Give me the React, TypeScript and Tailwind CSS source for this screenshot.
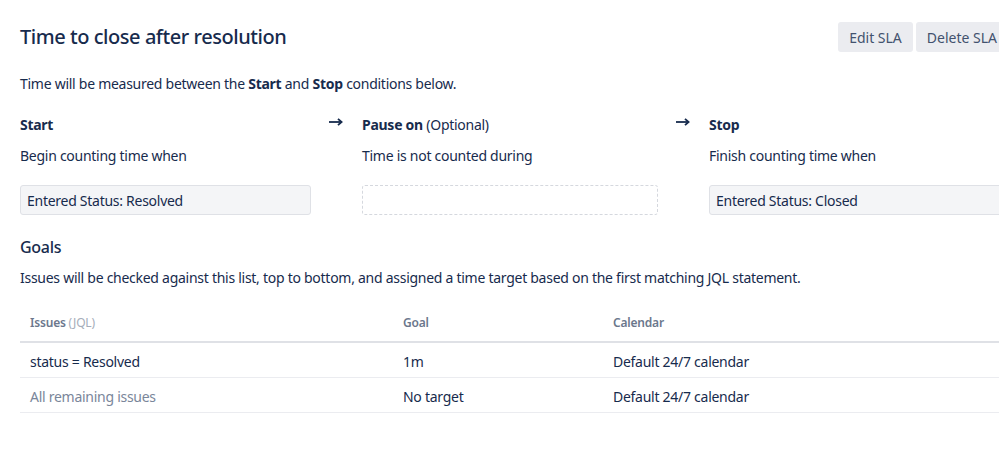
import React from 'react';

const font = { fontFamily: '"Noto Sans", "Open Sans", sans-serif' };

const Arrow = () => (
  <svg width="14" height="8" viewBox="0 0 14 8" className="mt-[3px] ml-[18px]">
    <path d="M0 4h12" stroke="#172b4d" strokeWidth="1.8" />
    <path d="M9 0.8L12.6 4L9 7.2" fill="none" stroke="#172b4d" strokeWidth="1.8" />
  </svg>
);

const Condition = ({
  title,
  note,
  sub,
  value,
}: {
  title: string;
  note?: string;
  sub: string;
  value?: string;
}) => (
  <div>
    <div className="text-[14px] leading-5 text-[#172b4d]">
      <span className="font-bold">{title}</span>
      {note && <span> {note}</span>}
    </div>
    <div className="mt-[11px] text-[14px] leading-5 text-[#172b4d]">{sub}</div>
    {value ? (
      <div className="mt-[19px] h-[30px] rounded-[3px] border border-[#dfe1e6] bg-[#f4f5f7] px-[6px] pt-[1px] flex items-center text-[14px] text-[#172b4d]">
        {value}
      </div>
    ) : (
      <div className="mt-[19px] h-[30px] rounded-[3px] border border-dashed border-[#d5d8de]" />
    )}
  </div>
);

const rows = [
  { jql: 'status = Resolved', goal: '1m', cal: 'Default 24/7 calendar', muted: false },
  { jql: 'All remaining issues', goal: 'No target', cal: 'Default 24/7 calendar', muted: true },
];

export default function App() {
  return (
    <div className="w-full min-h-screen bg-white overflow-hidden tracking-[-0.27px]" style={font}>
      <div className="w-[1008px] pl-5 pt-[22px]">
        <div className="flex items-center justify-between h-[30px]">
          <h1 className="text-[20px] font-medium text-[#172b4d] leading-6 tracking-[-0.45px]">Time to close after resolution</h1>
          <div className="flex gap-[3px]">
            <button className="h-[30px] px-[11px] rounded-[3px] bg-[#ebecf0] text-[14px] tracking-normal text-[#42526e]">Edit SLA</button>
            <button className="h-[30px] px-[11px] rounded-[3px] bg-[#ebecf0] text-[14px] tracking-normal text-[#42526e]">Delete SLA</button>
          </div>
        </div>

        <p className="mt-[22px] text-[14px] leading-5 text-[#172b4d]">
          Time will be measured between the <span className="font-bold">Start</span> and{' '}
          <span className="font-bold">Stop</span> conditions below.
        </p>

        <div className="mt-[21px] grid grid-cols-[291px_51px_296px_51px_1fr]">
          <Condition title="Start" sub="Begin counting time when" value="Entered Status: Resolved" />
          <Arrow />
          <Condition title="Pause on" note="(Optional)" sub="Time is not counted during" />
          <Arrow />
          <Condition title="Stop" sub="Finish counting time when" value="Entered Status: Closed" />
        </div>

        <h2 className="mt-[20px] text-[16px] leading-6 font-medium text-[#172b4d]">Goals</h2>
        <p className="mt-[9px] text-[14px] leading-5 text-[#172b4d]">
          Issues will be checked against this list, top to bottom, and assigned a time target based on the first matching JQL statement.
        </p>

        <table className="mt-[17px] w-full border-collapse text-left">
          <thead>
            <tr className="border-b-2 border-[#dfe1e6]">
              <th className="w-[373px] pl-[10px] py-[10px] text-[12px] leading-4 font-semibold text-[#6b778c] tracking-[-0.2px]">
                Issues <span className="font-normal text-[#a5adba]">(JQL)</span>
              </th>
              <th className="w-[210px] pl-[10px] py-[10px] text-[12px] leading-4 font-semibold text-[#6b778c] tracking-[-0.2px]">Goal</th>
              <th className="pl-[10px] py-[10px] text-[12px] leading-4 font-semibold text-[#6b778c] tracking-[-0.2px]">Calendar</th>
            </tr>
          </thead>
          <tbody>
            {rows.map(r => (
              <tr key={r.jql} className="border-b border-[#ebecf0]">
                <td className={`pl-[10px] pt-[9px] pb-[5px] text-[14px] leading-5 ${r.muted ? 'text-[#7a869a]' : 'text-[#172b4d]'}`}>
                  {r.jql}
                </td>
                <td className="pl-[10px] pt-[9px] pb-[5px] text-[14px] leading-5 text-[#172b4d]">{r.goal}</td>
                <td className="pl-[10px] pt-[9px] pb-[5px] text-[14px] leading-5 text-[#172b4d]">{r.cal}</td>
              </tr>
            ))}
          </tbody>
        </table>
      </div>
    </div>
  );
}
